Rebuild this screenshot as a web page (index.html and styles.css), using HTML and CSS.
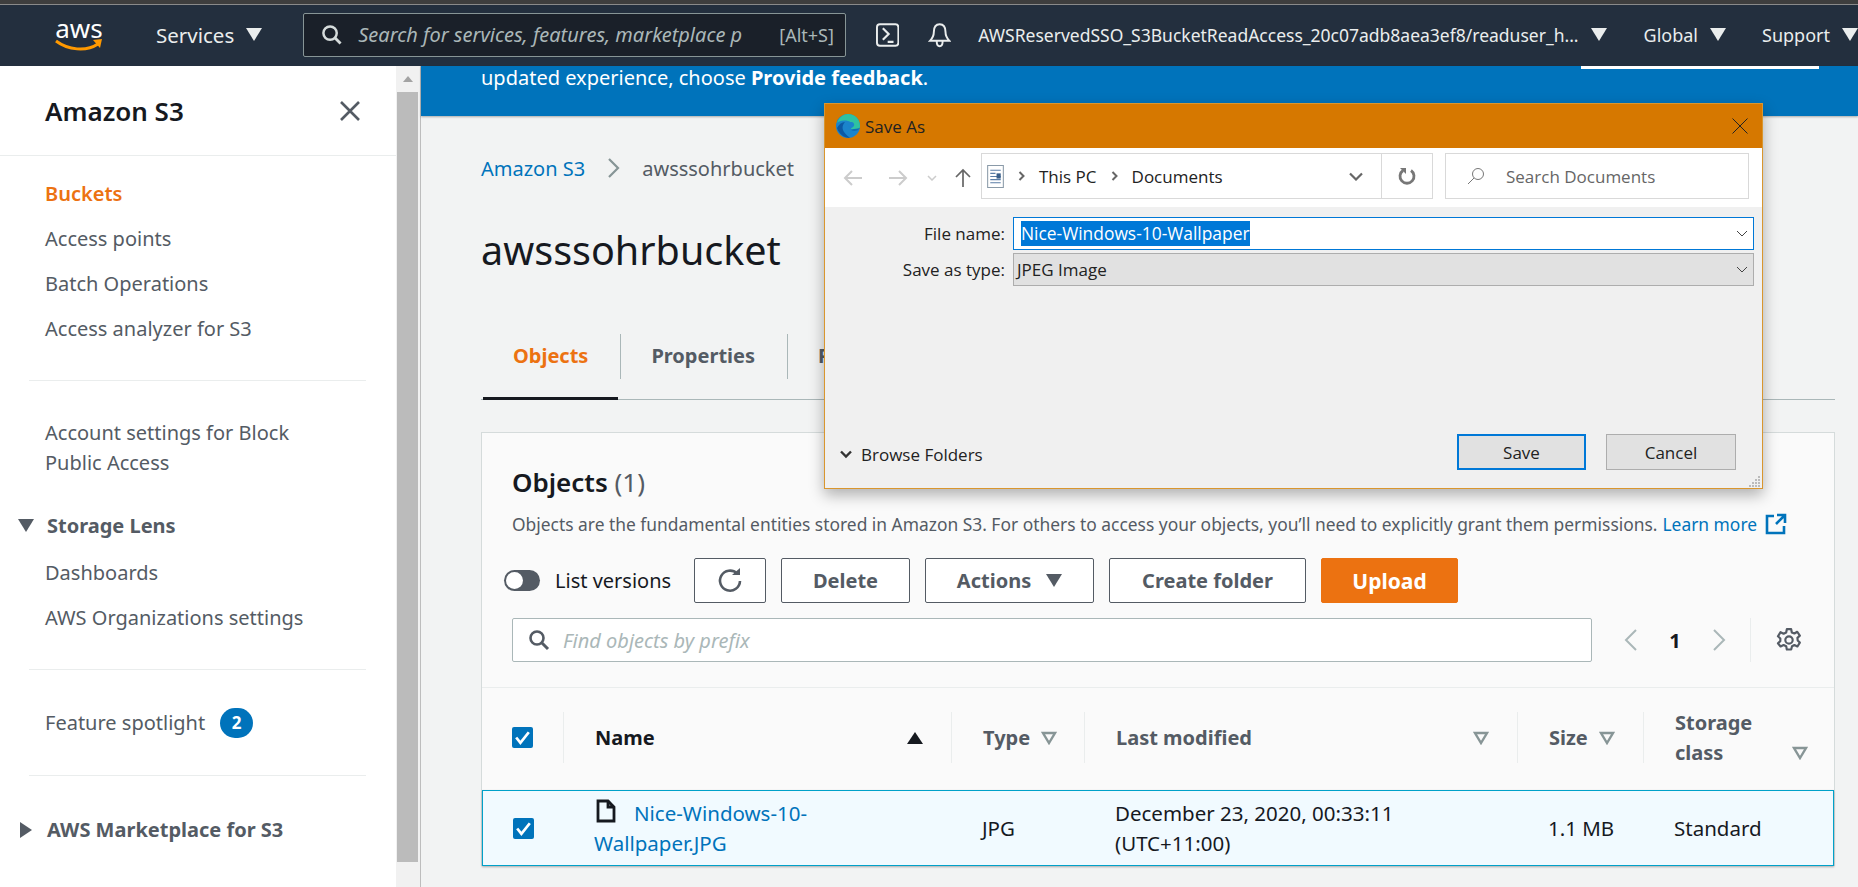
FILE: index.html
```html
<!DOCTYPE html>
<html lang="en">
<head>
    <meta charset="UTF-8">
    <meta name="viewport" content="width=device-width, initial-scale=1.0">
    <title>Amazon S3 - awsssohrbucket</title>
    <link rel="stylesheet" href="styles.css">
</head>
<body>
    <div class="top-strip"></div>
    <header class="topnav">
        <div class="logo">
            <span class="logo-text">aws</span>
            <svg class="logo-smile" viewBox="0 0 48 14"><path d="M1 2c12 9 30 11 42 3" fill="none" stroke="#f90" stroke-width="3"/><path d="M38 1l9-1-2 9z" fill="#f90"/></svg>
        </div>
        <span class="nav-item services">Services<i class="tri"></i></span>
        <div class="nav-search">
            <svg class="icon-search" viewBox="0 0 22 22"><circle cx="9.5" cy="9.5" r="7" fill="none" stroke="#d5dbdb" stroke-width="2.6"/><path d="M14.5 14.5l6 6" stroke="#d5dbdb" stroke-width="3"/></svg>
            <span class="nav-placeholder">Search for services, features, marketplace p</span>
            <span class="nav-shortcut">[Alt+S]</span>
        </div>
        <svg class="icon-terminal" viewBox="0 0 24 24"><rect x="1" y="1" width="22" height="22" rx="3" fill="none" stroke="#eaeded" stroke-width="2"/><path d="M7 5l6 6-6 6M12 19h6" fill="none" stroke="#eaeded" stroke-width="2.200"/></svg>
        <svg class="icon-bell" viewBox="0 0 24 26"><path d="M12 2c-5 0-6 4-6 8 0 4-2 7-4 9h20c-2-2-4-5-4-9 0-4-1-8-6-8zM9 20c0 6 6 6 6 0" fill="none" stroke="#eaeded" stroke-width="2"/></svg>
        <span class="nav-item user">AWSReservedSSO_S3BucketReadAccess_20c07adb8aea3ef8/readuser_h...<i class="tri"></i></span>
        <span class="nav-item global">Global<i class="tri"></i></span>
        <span class="nav-item support">Support<i class="tri"></i></span>
    </header>

    <div class="layout">
        <aside class="sidebar">
            <div class="side-head">
                <h2>Amazon S3</h2>
                <svg class="side-close" viewBox="0 0 22 22"><path d="M2 2l18 18M20 2L2 20" stroke="#545b64" stroke-width="2.6"/></svg>
            </div>
            <ul class="side-list first">
                <li class="active">Buckets</li>
                <li>Access points</li>
                <li>Batch Operations</li>
                <li>Access analyzer for S3</li>
            </ul>
            <hr class="side-rule">
            <p class="side-multi">Account settings for Block<br>Public Access</p>
            <div class="side-section open"><i class="tri-down"></i>Storage Lens</div>
            <ul class="side-list lens">
                <li>Dashboards</li>
                <li>AWS Organizations settings</li>
            </ul>
            <hr class="side-rule">
            <div class="side-feature">Feature spotlight <span class="badge">2</span></div>
            <hr class="side-rule rule-b">
            <div class="side-section closed"><i class="tri-right"></i>AWS Marketplace for S3</div>
        </aside>

        <div class="scrollbar">
            <i class="scroll-up"></i>
            <div class="scroll-thumb"></div>
        </div>

        <main class="content">
            <div class="banner">
                <span>updated experience, choose <b>Provide feedback</b>.</span>
                <span class="banner-btn"></span>
            </div>
            <div class="page">
                <nav class="crumbs">
                    <a>Amazon S3</a>
                    <svg viewBox="0 0 14 22"><path d="M2 2l9 9-9 9" fill="none" stroke="#879596" stroke-width="2.2"/></svg>
                    <span>awsssohrbucket</span>
                </nav>
                <h1>awsssohrbucket</h1>
                <div class="tabs">
                    <span class="tab active">Objects</span>
                    <i class="tab-sep"></i>
                    <span class="tab">Properties</span>
                    <i class="tab-sep"></i>
                    <span class="tab">Permissions</span>
                </div>

                <section class="card">
                    <div class="card-top">
                        <h2>Objects <span>(1)</span></h2>
                        <p class="card-desc">Objects are the fundamental entities stored in Amazon S3. For others to access your objects, you’ll need to explicitly grant them permissions. <a>Learn more</a>
                            <svg class="icon-ext" viewBox="0 0 22 22"><path d="M9 3H2v17h17v-7M12 2h8v8M20 2l-9 9" fill="none" stroke="#0073bb" stroke-width="2.6"/></svg>
                        </p>
                        <div class="toolbar">
                            <span class="toggle"><i></i></span>
                            <span class="toggle-label">List versions</span>
                            <button class="btn btn-refresh"><svg viewBox="0 0 26 26"><path d="M20 5.5A10 10 0 1 0 23 13" fill="none" stroke="#545b64" stroke-width="2.6"/><path d="M15 7h8V0z" fill="#545b64"/></svg></button>
                            <button class="btn btn-delete">Delete</button>
                            <button class="btn btn-actions">Actions<i class="tri-btn"></i></button>
                            <button class="btn btn-folder">Create folder</button>
                            <button class="btn btn-upload">Upload</button>
                        </div>
                        <div class="filter-row">
                            <div class="filter">
                                <svg viewBox="0 0 22 22"><circle cx="9" cy="9" r="6.5" fill="none" stroke="#545b64" stroke-width="2.6"/><path d="M14 14l6 6" stroke="#545b64" stroke-width="3"/></svg>
                                <span>Find objects by prefix</span>
                            </div>
                            <div class="pager">
                                <svg viewBox="0 0 14 24"><path d="M12 2L2 12l10 10" fill="none" stroke="#aab7b8" stroke-width="2"/></svg>
                                <b>1</b>
                                <svg viewBox="0 0 14 24"><path d="M2 2l10 10L2 22" fill="none" stroke="#aab7b8" stroke-width="2"/></svg>
                            </div>
                            <svg class="icon-gear" viewBox="0 0 24 24"><path d="M10 2h4l.6 3 2.4 1 2.6-1.6 2.4 3.6-2.2 2 .2 2.400 2 2-2.200 3.600-2.800-1.400-2.200 1.200-.8 3h-4l-.6-3-2.400-1.200-2.800 1.400L1.800 15l2.200-2v-2.400L1.800 8.600l2.400-3.800L7 6.200 9.400 5z" fill="none" stroke="#545b64" stroke-width="2" stroke-linejoin="round"/><circle cx="12" cy="12" r="3.4" fill="none" stroke="#545b64" stroke-width="2"/></svg>
                        </div>
                    </div>

                    <div class="tbl-row tbl-head">
                        <div class="cell"><span class="check"><svg viewBox="0 0 20 20"><path d="M4 10l4 5 8-10" fill="none" stroke="#fff" stroke-width="2.6"/></svg></span></div>
                        <div class="cell sep name-head"><span class="dark">Name</span><i class="tri-sort"></i></div>
                        <div class="cell sep">Type<svg class="tri-filter" viewBox="0 0 16 14"><path d="M2 2h12L8 12z" fill="#fafafa" stroke="#879596" stroke-width="2.400"/></svg></div>
                        <div class="cell sep modified-head">Last modified<svg class="tri-filter" viewBox="0 0 16 14"><path d="M2 2h12L8 12z" fill="#fafafa" stroke="#879596" stroke-width="2.400"/></svg></div>
                        <div class="cell sep">Size<svg class="tri-filter" viewBox="0 0 16 14"><path d="M2 2h12L8 12z" fill="#fafafa" stroke="#879596" stroke-width="2.400"/></svg></div>
                        <div class="cell sep storage-head"><span>Storage<br>class</span><svg class="tri-filter" viewBox="0 0 16 14"><path d="M2 2h12L8 12z" fill="#fafafa" stroke="#879596" stroke-width="2.400"/></svg></div>
                    </div>
                    <div class="tbl-row tbl-body">
                        <div class="cell"><span class="check"><svg viewBox="0 0 20 20"><path d="M4 10l4 5 8-10" fill="none" stroke="#fff" stroke-width="2.6"/></svg></span></div>
                        <div class="cell name-cell">
                            <a><svg class="icon-file" viewBox="0 0 20 24"><path d="M2 2h10l6 6v14H2zM12 2v6h6" fill="none" stroke="#16191f" stroke-width="2.8"/></svg>Nice-Windows-10-<br>Wallpaper.JPG</a>
                        </div>
                        <div class="cell">JPG</div>
                        <div class="cell">December 23, 2020, 00:33:11<br>(UTC+11:00)</div>
                        <div class="cell">1.1 MB</div>
                        <div class="cell">Standard</div>
                    </div>
                </section>
            </div>
        </main>
    </div>

    <div class="dialog">
        <div class="dlg-title">
            <svg class="icon-edge" viewBox="0 0 24 24">
                <circle cx="12" cy="12" r="12" fill="#1b84cc"/>
                <path d="M1 9C3 3 8 0 12 0c7 0 12 5 12 12 0 3-3 4-6 4-2 0-3-1-3-2 2-1 2-6-3-7C7 6 3 7 1 9z" fill="#2fc2a0"/>
                <path d="M14 24c-6 0-11-4-13-10 2-4 5-6 8-6-3 3-3 7-1 10 2 3 5 5 6 6z" fill="#0c59a4"/>
                <path d="M24 14c-2 3-6 4-9 2 0 0 1-1 3-1 3 0 5-1 6-1z" fill="#0f6cb8"/>
                <path d="M16 8c3 1 3 5-1 6-2-1-4-4-3-6z" fill="#1b84cc"/>
            </svg>
            <span>Save As</span>
            <svg class="dlg-close" viewBox="0 0 16 16"><path d="M.5.5l15 15M15.500.5l-15 15" stroke="#222" stroke-width="1"/></svg>
        </div>
        <div class="dlg-bar">
            <svg class="arrow back" viewBox="0 0 20 16"><path d="M19 8H2M9 1L2 8l7 7" fill="none" stroke="#ccc" stroke-width="2"/></svg>
            <svg class="arrow forward" viewBox="0 0 20 16"><path d="M1 8h17M11 1l7 7-7 7" fill="none" stroke="#ccc" stroke-width="2"/></svg>
            <svg class="arrow recent" viewBox="0 0 10 6"><path d="M1 1l4 4 4-4" fill="none" stroke="#ccc" stroke-width="1.500"/></svg>
            <svg class="arrow up" viewBox="0 0 16 20"><path d="M8 19V2M1 9l7-7 7 7" fill="none" stroke="#666" stroke-width="1.700"/></svg>
            <div class="address">
                <svg class="icon-doc" viewBox="0 0 16 22"><path d="M.5.5h15v21H.5z" fill="#fff" stroke="#8a9aa8"/><path d="M3 5h10M3 8h5M3 11h10M3 14h10M3 17h10" stroke="#5b7ea6"/><path d="M9 8h4v5H9z" fill="#3a5f8a"/></svg>
                <svg class="crumb-chev" viewBox="0 0 8 10"><path d="M1.500 1l4 4-4 4" fill="none" stroke="#666" stroke-width="2"/></svg>
                <span>This PC</span>
                <svg class="crumb-chev" viewBox="0 0 8 10"><path d="M1.500 1l4 4-4 4" fill="none" stroke="#666" stroke-width="2"/></svg>
                <span>Documents</span>
                <svg class="addr-down" viewBox="0 0 14 9"><path d="M1 1.500l6 6 6-6" fill="none" stroke="#666" stroke-width="2.200"/></svg>
                <div class="addr-refresh"><svg viewBox="0 0 18 18"><path d="M5 3.500A7 7 0 1 0 13 3.500" fill="none" stroke="#777" stroke-width="2.800"/><path d="M2 1h6v6z" fill="#777"/></svg></div>
            </div>
            <div class="dlg-search">
                <svg viewBox="0 0 18 18"><circle cx="11" cy="7" r="5.500" fill="none" stroke="#777"/><path d="M7 11l-6 6" stroke="#777"/></svg>
                <span>Search Documents</span>
            </div>
        </div>
        <div class="dlg-body">
            <div class="field">
                <label>File name:</label>
                <div class="combo combo-input"><span class="selected">Nice-Windows-10-Wallpaper</span><svg viewBox="0 0 12 7"><path d="M1 1l5 5 5-5" fill="none" stroke="#444"/></svg></div>
            </div>
            <div class="field">
                <label>Save as type:</label>
                <div class="combo combo-select"><span>JPEG Image</span><svg viewBox="0 0 12 7"><path d="M1 1l5 5 5-5" fill="none" stroke="#444"/></svg></div>
            </div>
            <div class="dlg-foot">
                <span class="browse"><svg viewBox="0 0 12 10"><path d="M1 1.500l5 5 5-5" fill="none" stroke="#333" stroke-width="2.400"/></svg>Browse Folders</span>
                <button class="dlg-btn default">Save</button>
                <button class="dlg-btn">Cancel</button>
            </div>
        </div>
        <svg class="grip" viewBox="0 0 12 12"><path d="M9 1h2v2H9zM6 4h2v2H6zM9 4h2v2H9zM3 7h2v2H3zM6 7h2v2H6zM9 7h2v2H9zM0 10h2v2H0zM3 10h2v2H3zM6 10h2v2H6zM9 10h2v2H9z" fill="#bbb"/></svg>
    </div>
</body>
</html>
```

FILE: styles.css
```css
* {
    box-sizing: border-box;
}

body {
    margin: 0;
    height: 100vh;
    overflow: hidden;
    display: flex;
    flex-direction: column;
    background: #f2f3f3;
    font-family: "Noto Sans", Arial, sans-serif;
    font-size: 20px;
    color: #16191f;
}

ul {
    list-style: none;
    margin: 0;
    padding: 0;
}

i {
    display: block;
}

/* top bar */
.top-strip {
    height: 5px;
    background: #3e3e3e;
    border-bottom: 1px solid #8a8a8a;
}

.topnav {
    height: 61px;
    padding-bottom: 2px;
    background: #232f3e;
    color: #eaeded;
    display: flex;
    align-items: center;
    flex-shrink: 0;
}

.logo {
    margin-left: 55px;
    width: 48px;
    display: flex;
    flex-direction: column;
    align-items: center;
}

.logo-text {
    font-size: 26px;
    line-height: 22px;
    color: #fff;
}

.logo-smile {
    width: 48px;
    height: 14px;
}

.nav-item {
    display: flex;
    align-items: center;
    white-space: nowrap;
    font-size: 18px;
}

.tri {
    width: 0;
    height: 0;
    border-left: 8px solid transparent;
    border-right: 8px solid transparent;
    border-top: 13px solid #eaeded;
    margin-left: 12px;
}

.services {
    margin-left: 53px;
    font-size: 20.500px;
}

.nav-search {
    margin-left: 41px;
    width: 557px;
    height: 44px;
    background: #1a2029;
    border: 1px solid #879596;
    border-radius: 2px;
    display: flex;
    align-items: center;
    padding-left: 17px;
    font-size: 20px;
}

.icon-search {
    width: 21px;
    height: 21px;
    flex-shrink: 0;
}

.nav-placeholder {
    margin-left: 16px;
    width: 421px;
    flex-shrink: 0;
    font-style: italic;
    color: #aab7b8;
    white-space: nowrap;
    overflow: hidden;
}

.nav-shortcut {
    color: #aab7b8;
    font-size: 18px;
    white-space: nowrap;
}

.icon-terminal {
    width: 24px;
    height: 24px;
    margin-left: 30px;
}

.icon-bell {
    width: 24px;
    height: 26px;
    margin-left: 29px;
}

.user {
    margin-left: 27px;
    font-size: 17.500px;
}

.global {
    margin-left: 37px;
}

.support {
    margin-left: 36px;
}

/* page frame */
.layout {
    flex: 1;
    display: flex;
    min-height: 0;
}

.sidebar {
    width: 396px;
    flex-shrink: 0;
    background: #fff;
    color: #545b64;
}

.side-head {
    height: 90px;
    padding: 0 35px 0 45px;
    display: flex;
    align-items: center;
    justify-content: space-between;
    border-bottom: 1px solid #eaeded;
}

.side-head h2 {
    margin: 0;
    font-size: 26px;
    font-weight: 600;
    color: #16191f;
}

.side-close {
    width: 22px;
    height: 22px;
}

.side-list li {
    height: 45px;
    line-height: 45px;
    padding-left: 45px;
}

.side-list.first {
    margin-top: 15px;
}

.side-list.lens {
    margin-top: 2px;
}

.side-list .active {
    color: #ec7211;
    font-weight: 600;
}

.side-rule {
    margin: 29px 30px 0 29px;
    border: none;
    border-top: 1px solid #eaeded;
}

.rule-b {
    margin-top: 30px;
}

.side-multi {
    margin: 37px 0 0;
    padding-left: 45px;
    line-height: 30px;
}

.side-section {
    height: 45px;
    display: flex;
    align-items: center;
    padding-left: 18px;
    font-weight: 700;
}

.side-section.open {
    margin-top: 25px;
}

.side-section.closed {
    margin-top: 31px;
}

.tri-down {
    width: 0;
    height: 0;
    border-left: 8px solid transparent;
    border-right: 8px solid transparent;
    border-top: 13px solid #545b64;
    margin-right: 13px;
}

.tri-right {
    width: 0;
    height: 0;
    border-top: 8px solid transparent;
    border-bottom: 8px solid transparent;
    border-left: 12px solid #545b64;
    margin: 0 15px 0 2px;
}

.side-feature {
    margin-top: 30px;
    height: 45px;
    padding-left: 45px;
    display: flex;
    align-items: center;
    gap: 15px;
}

.badge {
    width: 33px;
    height: 30px;
    border-radius: 15px;
    background: #0073bb;
    color: #fff;
    font-size: 17px;
    font-weight: 700;
    text-align: center;
    line-height: 30px;
}

.scrollbar {
    width: 25px;
    flex-shrink: 0;
    background: #f1f1f1;
    border-right: 1px solid #bdbdbd;
    padding: 10px 2px 0 1px;
}

.scroll-up {
    width: 0;
    height: 0;
    margin: 0 auto;
    border-left: 5px solid transparent;
    border-right: 5px solid transparent;
    border-bottom: 6px solid #a3a3a3;
}

.scroll-thumb {
    margin-top: 10px;
    height: 770px;
    background: #bbb;
}

.content {
    flex: 1;
    min-width: 0;
}

.banner {
    height: 50px;
    background: #0073bb;
    color: #fff;
    padding: 0 39px 0 60px;
    display: flex;
    justify-content: space-between;
    line-height: 24px;
    box-shadow: 0 1px 2px rgba(0, 0, 0, 0.3);
}

.banner-btn {
    width: 238px;
    height: 3px;
    background: #fff;
}

.page {
    padding: 0 23px 0 60px;
}

.crumbs {
    margin-top: 37px;
    height: 30px;
    display: flex;
    align-items: center;
    color: #545b64;
}

.crumbs a {
    color: #0073bb;
}

.crumbs svg {
    width: 14px;
    height: 22px;
    margin: 0 21px 0 22px;
}

h1 {
    margin: 42px 0 0;
    font-size: 39.500px;
    font-weight: 400;
    line-height: 50px;
}

.tabs {
    margin-top: 58px;
    height: 67px;
    padding-left: 2px;
    border-bottom: 1px solid #aab7b8;
    display: flex;
    align-items: center;
    font-weight: 700;
    color: #545b64;
}

.tab {
    height: 67px;
    line-height: 45px;
    padding: 0 30px;
    border-bottom: 3px solid transparent;
    white-space: nowrap;
}

.tab.active {
    color: #ec7211;
    border-bottom-color: #16191f;
}

.tab-sep {
    width: 1px;
    height: 45px;
    margin: 0 0 20px 2px;
    background: #aab7b8;
}

/* objects card */
.card {
    margin: 32px 0 0 0;
    background: #fafafa;
    border: 1px solid #d5dbdb;
    border-bottom: none;
}

.card-top {
    padding: 33px 0 0 30px;
}

.card h2 {
    margin: 0;
    font-size: 26px;
    line-height: 32px;
    font-weight: 600;
}

.card h2 span {
    font-weight: 400;
    color: #545b64;
}

.card-desc {
    margin: 14px 0 0;
    font-size: 17.400px;
    line-height: 24px;
    color: #545b64;
    white-space: nowrap;
    display: flex;
    align-items: center;
    gap: 5px;
}

.card-desc a {
    color: #0073bb;
}

.icon-ext {
    width: 22px;
    height: 22px;
    margin-left: 3px;
}

.toolbar {
    margin: 22px 0 0 -8px;
    height: 45px;
    display: flex;
    align-items: center;
    gap: 15px;
}

.toggle {
    width: 36px;
    height: 21px;
    border-radius: 11px;
    background: #545b64;
    padding: 2px;
}

.toggle i {
    width: 17px;
    height: 17px;
    border-radius: 50%;
    background: #fff;
}

.toggle-label {
    width: 124px;
    white-space: nowrap;
}

.btn {
    height: 45px;
    background: #fff;
    border: 1px solid #545b64;
    border-radius: 2px;
    color: #545b64;
    font-family: inherit;
    font-size: 20px;
    font-weight: 700;
    display: flex;
    align-items: center;
    justify-content: center;
}

.btn svg {
    width: 26px;
    height: 26px;
}

.btn-refresh {
    width: 72px;
}

.btn-delete {
    width: 129px;
}

.btn-actions {
    width: 169px;
}

.btn-folder {
    width: 197px;
}

.btn-upload {
    width: 137px;
    background: #ec7211;
    border-color: #ec7211;
    color: #fff;
    font-size: 21px;
}

.tri-btn {
    width: 0;
    height: 0;
    margin-left: 15px;
    border-left: 8px solid transparent;
    border-right: 8px solid transparent;
    border-top: 13px solid #545b64;
}

.filter-row {
    margin-top: 15px;
    display: flex;
    align-items: center;
    height: 44px;
}

.filter {
    width: 1080px;
    height: 44px;
    background: #fff;
    border: 1px solid #aab7b8;
    border-radius: 2px;
    display: flex;
    align-items: center;
    padding-left: 15px;
    gap: 13px;
    font-style: italic;
    color: #aab7b8;
}

.filter svg {
    width: 22px;
    height: 22px;
}

.pager {
    margin-left: 32px;
    width: 127px;
    height: 44px;
    display: flex;
    align-items: center;
    gap: 30px;
    border-right: 1px solid #eaeded;
}

.pager svg {
    width: 14px;
    height: 24px;
}

.pager b {
    width: 14px;
    text-align: center;
}

.icon-gear {
    width: 26px;
    height: 26px;
    margin-left: 25px;
}

.tbl-row {
    display: grid;
    grid-template-columns: 81px 388px 133px 433px 126px 1fr;
}

.tbl-head {
    margin-top: 25px;
    height: 103px;
    padding-bottom: 3px;
    border-top: 1px solid #eaeded;
    font-weight: 700;
    color: #545b64;
    align-items: center;
}

.tbl-head .cell {
    height: 51px;
    padding-left: 31px;
    display: flex;
    align-items: center;
}

.tbl-head .sep {
    border-left: 1px solid #eaeded;
}

.tbl-head .cell:first-child,
.tbl-body .cell:first-child {
    padding-left: 30px;
}

.dark {
    color: #16191f;
}

.name-head,
.modified-head {
    justify-content: space-between;
    padding-right: 28px;
}

.tri-sort {
    width: 0;
    height: 0;
    border-left: 8px solid transparent;
    border-right: 8px solid transparent;
    border-bottom: 12px solid #16191f;
}

.tri-filter {
    width: 16px;
    height: 14px;
    margin-left: 11px;
    flex-shrink: 0;
}

.storage-head span {
    line-height: 30px;
    width: 117px;
}

.storage-head .tri-filter {
    margin: 30px 0 0 0;
}

.tbl-body {
    height: 76px;
    background: #f1faff;
    border: 1px solid #00a1c9;
    box-shadow: 0 1px 2px rgba(0, 0, 0, 0.3);
    align-items: center;
    line-height: 30px;
    font-size: 20.500px;
    white-space: nowrap;
}

.tbl-body .cell {
    padding-left: 30px;
}

.tbl-body .name-cell a {
    color: #0073bb;
    display: block;
}

.icon-file {
    width: 20px;
    height: 24px;
    margin: 0 18px -2px 2px;
}

.check {
    width: 21px;
    height: 21px;
    border-radius: 2px;
    background: #0073bb;
    display: block;
}

.check svg {
    display: block;
    width: 21px;
    height: 21px;
}

/* save as dialog */
.dialog {
    position: absolute;
    left: 824px;
    top: 103px;
    width: 939px;
    height: 386px;
    background: #f0f0f0;
    border: 1px solid #d9962e;
    box-shadow: 0 6px 14px rgba(0, 0, 0, 0.3);
    font-family: "Open Sans", "Noto Sans", sans-serif;
    font-size: 17px;
    color: #222;
}

.dlg-title {
    height: 44px;
    background: #d67800;
    display: flex;
    align-items: center;
    padding: 0 14px 0 11px;
}

.icon-edge {
    width: 24px;
    height: 24px;
}

.dlg-title span {
    margin-left: 5px;
    flex: 1;
}

.dlg-close {
    width: 16px;
    height: 16px;
}

.dlg-bar {
    height: 59px;
    background: #fff;
    display: flex;
    align-items: center;
    padding: 0 11px 0 0;
}

.arrow.back {
    width: 20px;
    height: 16px;
    margin-left: 18px;
}

.arrow.forward {
    width: 20px;
    height: 16px;
    margin-left: 25px;
}

.arrow.recent {
    width: 10px;
    height: 6px;
    margin-left: 19px;
}

.arrow.up {
    width: 16px;
    height: 20px;
    margin-left: 18px;
}

.address {
    margin: 0 0 3px 10px;
    width: 452px;
    height: 46px;
    border: 1px solid #d9d9d9;
    display: flex;
    align-items: center;
    padding-left: 5px;
}

.icon-doc {
    width: 17px;
    height: 23px;
}

.crumb-chev {
    width: 8px;
    height: 10px;
    margin: 0 13px 0 14px;
}

.addr-down {
    width: 14px;
    height: 9px;
    margin-left: auto;
    margin-right: 18px;
}

.addr-refresh {
    width: 51px;
    height: 44px;
    border-left: 1px solid #d9d9d9;
    display: flex;
    align-items: center;
    justify-content: center;
}

.addr-refresh svg {
    width: 18px;
    height: 18px;
}

.dlg-search {
    margin: 0 0 3px 12px;
    width: 304px;
    height: 46px;
    border: 1px solid #d9d9d9;
    display: flex;
    align-items: center;
    padding-left: 21px;
    gap: 21px;
    color: #666;
}

.dlg-search svg {
    width: 18px;
    height: 18px;
}

.dlg-body {
    padding-top: 10px;
}

.field {
    display: flex;
    align-items: center;
    margin-bottom: 3px;
}

.field label {
    width: 180px;
    margin-right: 8px;
    text-align: right;
}

.combo {
    width: 741px;
    height: 33px;
    display: flex;
    align-items: center;
    justify-content: space-between;
    padding: 0 5px 0 7px;
}

.combo svg {
    width: 12px;
    height: 7px;
}

.combo-input {
    background: #fff;
    border: 1px solid #0078d7;
}

.combo-select {
    background: #e1e1e1;
    border: 1px solid #adadad;
    padding-left: 3px;
}

.selected {
    background: #0078d7;
    color: #fff;
    font-size: 17.400px;
    line-height: 25px;
}

.dlg-foot {
    margin-top: 148px;
    display: flex;
    align-items: center;
}

.browse {
    display: flex;
    align-items: center;
    gap: 9px;
    margin: 5px auto 0 15px;
}

.browse svg {
    width: 12px;
    height: 10px;
}

.dlg-btn {
    width: 130px;
    height: 36px;
    margin-right: 26px;
    background: #e1e1e1;
    border: 1px solid #adadad;
    font-family: inherit;
    font-size: 17px;
    color: #222;
}

.dlg-btn.default {
    width: 129px;
    margin-right: 20px;
    border: 2px solid #0078d7;
}

.grip {
    position: absolute;
    right: 1px;
    bottom: 1px;
    width: 12px;
    height: 12px;
}
```
